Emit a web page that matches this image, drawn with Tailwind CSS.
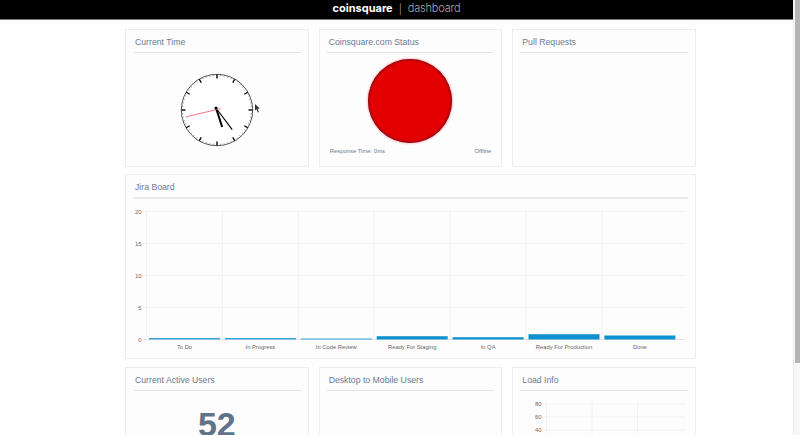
<!DOCTYPE html>
<html lang="en">
    <head>
        <meta charset="UTF-8" />
        <meta name="viewport" content="width=device-width, initial-scale=1.0" />
        <title>Coinsquare Dashboard</title>
        <script src="https://cdn.jsdelivr.net/npm/@tailwindcss/browser@4"></script>
    </head>
    <body class="bg-[#fefefe] h-screen overflow-hidden flex font-['Liberation_Sans',sans-serif]">
        <div class="flex-1 min-w-0">
            <!-- Header -->
            <header class="h-5 bg-black border-b border-[#777] flex items-center justify-center gap-[6px] pb-[2px] font-['Inter',sans-serif] leading-none">
                <span class="font-bold text-white text-[11px]">coinsquare</span>
                <span class="text-[#aaa] font-light text-[10px]">|</span>
                <span class="text-[#aaa] font-light text-[11px] tracking-[-0.2px]">dashboard</span>
            </header>

            <main class="w-[571px] ml-[125px] mt-[9px] text-[#6a7b90]">
                <!-- Top row -->
                <div class="grid grid-cols-3 gap-[10px]">
                    <section class="h-[138px] border border-[#eeeeee] bg-[#fdfdfd] px-[7px] pt-2">
                        <h2 class="text-[8.7px] leading-[9px] pl-[2px] pb-[5px] border-b border-[#e4e5ea]">Current Time</h2>
                        <div class="flex justify-center pt-[20px]">
                            <svg id="clock" width="74" height="74" viewBox="-37 -37 74 74">
                                <circle r="35.7" fill="#fff" stroke="#555" stroke-width="1" />
                                <line x1="-1" y1="-2" x2="5.2" y2="17" stroke="#000" stroke-width="2" />
                                <line x1="-1" y1="-2" x2="15.2" y2="19.6" stroke="#000" stroke-width="1.1" />
                                <line x1="3.5" y1="-1.4" x2="-31.5" y2="7" stroke="#f4647a" stroke-width="0.9" />
                                <circle cx="-1" cy="-2" r="1.5" fill="#000" />
                            </svg>
                        </div>
                    </section>
                    <section class="h-[138px] border border-[#eeeeee] bg-[#fdfdfd] px-[7px] pt-2 flex flex-col">
                        <h2 class="text-[8.7px] leading-[9px] pl-[2px] pb-[5px] border-b border-[#e4e5ea]">Coinsquare.com Status</h2>
                        <div class="flex justify-center pt-[6px]">
                            <div class="w-[84px] h-[84px] rounded-full bg-[#e30000] shadow-[0_0_2px_1px_#f7c0c8,inset_0_0_2px_1px_#7a0f1a]"></div>
                        </div>
                        <div class="flex justify-between mt-[4px] px-[3px] text-[5.9px] leading-[9px]">
                            <span>Response Time: 0ms</span>
                            <span>Offline</span>
                        </div>
                    </section>
                    <section class="h-[138px] border border-[#eeeeee] bg-[#fdfdfd] px-[7px] pt-2">
                        <h2 class="text-[8.7px] leading-[9px] pl-[2px] pb-[5px] border-b border-[#e4e5ea]">Pull Requests</h2>
                    </section>
                </div>

                <!-- Jira board -->
                <section class="mt-[7px] h-[185px] border border-[#eeeeee] bg-[#fdfdfd] px-[7px] pt-2">
                    <h2 class="text-[8.7px] leading-[9px] pl-[2px] pb-[5px] border-b-2 border-[#ececee]">Jira Board</h2>
                    <svg id="jira" class="block" width="555" height="160" viewBox="133 199 555 160"></svg>
                </section>

                <!-- Bottom row -->
                <div class="mt-2 grid grid-cols-3 gap-[10px]">
                    <section class="h-[138px] border border-[#eeeeee] bg-[#fdfdfd] px-[7px] pt-2">
                        <h2 class="text-[8.7px] leading-[9px] pl-[2px] pb-[5px] border-b border-[#e4e5ea]">Current Active Users</h2>
                        <div class="text-center text-[34px] leading-none font-bold text-[#5f7489] pt-[16px]">52</div>
                    </section>
                    <section class="h-[138px] border border-[#eeeeee] bg-[#fdfdfd] px-[7px] pt-2">
                        <h2 class="text-[8.7px] leading-[9px] pl-[2px] pb-[5px] border-b border-[#e4e5ea]">Desktop to Mobile Users</h2>
                    </section>
                    <section class="h-[138px] border border-[#eeeeee] bg-[#fdfdfd] px-[7px] pt-2">
                        <h2 class="text-[8.7px] leading-[9px] pl-[2px] pb-[5px] border-b border-[#e4e5ea]">Load Info</h2>
                        <svg id="load" class="block" width="167" height="60" viewBox="520 391 167 60"></svg>
                    </section>
                </div>
            </main>
        </div>

        <!-- Scrollbar -->
        <div class="w-[7px] h-full bg-[#f7f7f7] border-l border-[#ececec] pl-px">
            <div class="w-[5px] h-[363px] bg-[#b4b4b4]"></div>
        </div>

        <!-- Mouse pointer -->
        <svg class="absolute left-[255px] top-[104px]" width="6" height="10" viewBox="0 0 6 10">
            <path d="M0 0 L0 6.5 L1.5 5.2 L2.8 8.4 L3.8 8 L2.7 4.8 L4.8 4.6 Z" fill="#333" />
        </svg>

        <script>
            const NS = "http://www.w3.org/2000/svg";

            function add(svg, tag, attrs, text) {
                const el = document.createElementNS(NS, tag);
                for (const key in attrs) el.setAttribute(key, attrs[key]);
                if (text) el.textContent = text;
                svg.appendChild(el);
            }

            // clock ticks
            const clock = document.getElementById("clock");
            const face = clock.querySelector("circle");
            for (let i = 0; i < 60; i++) {
                const a = (i * Math.PI) / 30;
                const big = i % 5 === 0;
                const r = big ? 31.5 : 33.8;
                const tick = document.createElementNS(NS, "line");
                tick.setAttribute("x1", r * Math.sin(a));
                tick.setAttribute("y1", -r * Math.cos(a));
                tick.setAttribute("x2", 35.5 * Math.sin(a));
                tick.setAttribute("y2", -35.5 * Math.cos(a));
                tick.setAttribute("stroke", big ? "#000" : "#777");
                tick.setAttribute("stroke-width", big ? 1.4 : 0.7);
                face.after(tick);
            }

            // jira chart
            const jira = document.getElementById("jira");
            const grid = "#f2f2f3";
            const chartText = { "font-size": 5.8, fill: "#666", "font-family": "Liberation Sans" };
            [20, 15, 10, 5, 0].forEach((v, i) => {
                const y = 211.5 + i * 32;
                add(jira, "line", { x1: 143, x2: 685, y1: y, y2: y, stroke: i === 4 ? "#e4e4e6" : grid });
                add(jira, "text", { ...chartText, x: 141.5, y: y + 2, "text-anchor": "end" }, String(v));
            });
            const columns = [
                ["To Do", 1.5, "#35a3d8"],
                ["In Progress", 1.5, "#35a3d8"],
                ["In Code Review", 1, "#35a3d8"],
                ["Ready For Staging", 3.3, "#0f91d0"],
                ["In QA", 2.3, "#0f91d0"],
                ["Ready For Production", 5.3, "#0f91d0"],
                ["Done", 4, "#0f91d0"],
            ];
            columns.forEach(([label, h, color], i) => {
                const x = 146.5 + i * 75.9;
                add(jira, "line", { x1: x, x2: x, y1: 210, y2: 339, stroke: grid });
                add(jira, "rect", { x: x + 2.5, y: 339.5 - h, width: 71, height: h, fill: color });
                add(jira, "text", { ...chartText, x: x + 38, y: 348.5, "text-anchor": "middle" }, label);
            });

            // load info chart
            const load = document.getElementById("load");
            [80, 60, 40].forEach((v, i) => {
                const y = 404 + i * 13;
                add(load, "line", { x1: 543, x2: 686, y1: y, y2: y, stroke: grid });
                add(load, "text", { ...chartText, x: 541.5, y: y + 2, "text-anchor": "end" }, String(v));
            });
            [546.5, 592, 637.5].forEach((x) => {
                add(load, "line", { x1: x, x2: x, y1: 402, y2: 451, stroke: grid });
            });
        </script>
    </body>
</html>
